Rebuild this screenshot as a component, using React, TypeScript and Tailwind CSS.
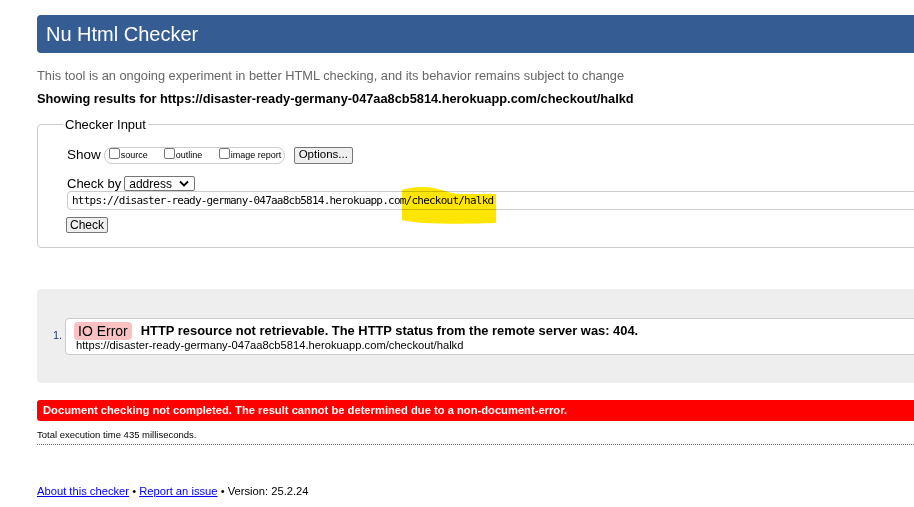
import React from 'react';

const URL = 'https://disaster-ready-germany-047aa8cb5814.herokuapp.com/checkout/halkd';

const Box = ({ label, w }: { label: string; w: string }) => (
    <label className={`flex items-center gap-[1px] shrink-0 whitespace-nowrap ${w}`}>
        <span className="w-[11px] h-[11px] border border-[#767676] rounded-[2px] bg-white -mt-[3px] shrink-0" />
        <span className="text-[9px] leading-none">{label}</span>
    </label>
);

const App = () => {
    return (
        <div className="w-[914px] h-[507px] overflow-hidden bg-white text-black" style={{ fontFamily: '"Liberation Sans", Arial, sans-serif' }}>
            <div className="w-[960px] pl-[37px] pt-[15px]">
                <h1 className="h-[38px] bg-[#365c94] rounded-l-[4px] text-white text-[20px] leading-[38px] pl-[9px]">Nu Html Checker</h1>

                <p className="mt-[15px] text-[12.8px] leading-[16px] text-[#666]">This tool is an ongoing experiment in better HTML checking, and its behavior remains subject to change</p>
                <p className="mt-[7px] text-[12.8px] leading-[16px] font-bold">Showing results for {URL}</p>

                <fieldset className="mt-[10px] border border-[#ccc] rounded-l-[4px] pl-[29px] pb-[11px] pt-[14px]">
                    <legend className="-ml-[4px] px-[2px] text-[13px] leading-[15px]">Checker Input</legend>

                    <div className="flex items-center h-[18px]">
                        <span className="text-[13.5px] mr-[3px]">Show</span>
                        <div className="flex items-center h-[17px] w-[181px] border border-[#ccc] rounded-[8px] pl-[4px]">
                            <Box label="source" w="w-[55px]" />
                            <Box label="outline" w="w-[55px]" />
                            <Box label="image report" w="w-auto" />
                        </div>
                        <button className="ml-[9px] h-[17px] w-[59px] text-[11.5px] leading-none bg-[#efefef] border border-[#767676] rounded-[2px]">Options...</button>
                    </div>

                    <div className="flex items-center mt-[12px] h-[15px]">
                        <span className="text-[13px] mr-[3px]">Check by</span>
                        <div className="flex items-center justify-between w-[71px] h-[15px] border border-[#767676] rounded-[2px] pl-[4px] pr-[5px]">
                            <span className="text-[12px] leading-none">address</span>
                            <svg width="10" height="7" viewBox="0 0 10 7"><path d="M1 1.5 L5 5.5 L9 1.5" fill="none" stroke="#000" strokeWidth="1.8" /></svg>
                        </div>
                    </div>

                    <div className="relative h-[19px] border border-[#ccc] rounded-l-[4px] pl-[4px] flex items-center">
                        <span className="text-[11px] leading-none tracking-[-0.77px]" style={{ fontFamily: '"DejaVu Sans Mono", "Liberation Mono", monospace' }}>{URL}</span>
                        <svg className="absolute left-[333px] top-[-5px] w-[96px] h-[38px] mix-blend-multiply" viewBox="0 0 96 38">
                            <path d="M1 3 C10 0 22 -1 32 1 C42 3 50 6 56 7 L95 7 L95 36 C70 37 45 37 22 36 C12 35 5 34 1 33 Z" fill="#ffe600" />
                        </svg>
                    </div>

                    <button className="mt-[7px] h-[16px] w-[42px] -ml-[1px] text-[12px] leading-none bg-[#efefef] border border-[#767676] rounded-[2px]">Check</button>
                </fieldset>

                <div className="mt-[41px] h-[94px] bg-[#eee] rounded-l-[4px] pt-[29px] flex">
                    <span className="w-[28px] pl-[16px] pt-[9px] text-[11px] text-[#1d3a6b]">1.</span>
                    <div className="flex-1 h-[37px] bg-white border border-[#ccc] rounded-l-[4px] pl-[8px] pt-[3px]">
                        <div className="flex items-center">
                            <span className="h-[18px] px-[4px] rounded-[4px] bg-[#f9c1c1] text-[14px] leading-[18px]">IO Error</span>
                            <span className="ml-[9px] text-[12.9px] leading-[18px] font-bold">HTTP resource not retrievable. The HTTP status from the remote server was: 404.</span>
                        </div>
                        <div className="text-[11.2px] leading-[11px] pl-[2px]">{URL}</div>
                    </div>
                </div>

                <div className="mt-[17px] h-[21px] bg-[#f00] rounded-l-[3px] pl-[6px] text-white font-bold text-[11.2px] leading-[21px]">Document checking not completed. The result cannot be determined due to a non-document-error.</div>

                <p className="mt-[8px] text-[9.5px] leading-[12px]">Total execution time 435 milliseconds.</p>
                <div className="mt-[3px] border-t border-dotted border-[#666]" />

                <p className="mt-[40px] text-[11.2px] leading-[13px]">
                    <a href="#" className="text-[#00e] underline">About this checker</a> • <a href="#" className="text-[#00e] underline">Report an issue</a> • Version: 25.2.24
                </p>
            </div>
        </div>
    );
};
export default App;
